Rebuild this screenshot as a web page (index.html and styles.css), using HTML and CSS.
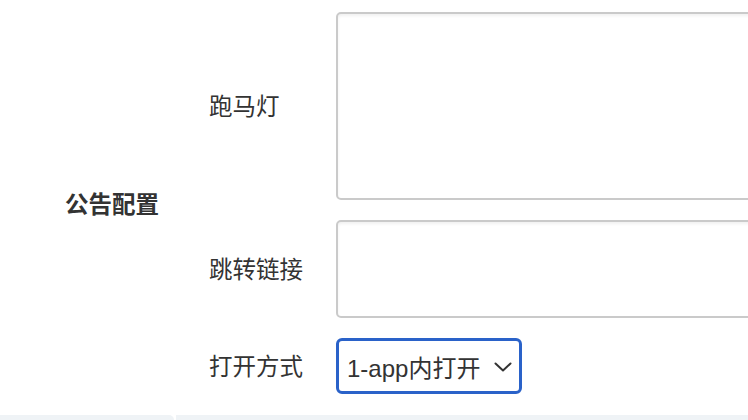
FILE: index.html
```html
<!DOCTYPE html>
<html lang="zh">
<head>
<meta charset="utf-8">
<link rel="stylesheet" href="styles.css">
</head>
<body>
<div class="page">
  <div class="group">
    <div class="group-title">公告配置</div>
    <div class="fields">
      <div class="row">
        <label class="label">跑马灯</label>
        <textarea class="input tall"></textarea>
      </div>
      <div class="row">
        <label class="label">跳转链接</label>
        <textarea class="input short"></textarea>
      </div>
      <div class="row">
        <label class="label">打开方式</label>
        <div class="select">
          <span class="select-text">1-app内打开</span>
          <svg class="chev" width="18" height="10" viewBox="0 0 18 10"><path d="M1.5 1.5 L9 8.5 L16.5 1.5" fill="none" stroke="#333" stroke-width="2" stroke-linecap="round" stroke-linejoin="round"/></svg>
        </div>
      </div>
    </div>
  </div>
  <div class="footer">
    <div class="foot-left"></div>
    <div class="foot-right"></div>
  </div>
</div>
</body>
</html>
```
FILE: styles.css
```css
* { box-sizing: border-box; }
html, body { margin: 0; padding: 0; background: #fff; overflow: hidden; }
body {
  width: 748px; height: 420px;
  font-family: "Liberation Sans", "Noto Sans CJK SC", sans-serif;
  color: #333;
}
.page { width: 748px; height: 420px; display: flex; flex-direction: column; overflow: hidden; }
.group { display: flex; align-items: center; padding-top: 12px; }
.group-title {
  flex: 0 0 209px; padding-left: 65px;
  font-family: "Noto Sans CJK SC", sans-serif;
  font-size: 23.5px; font-weight: 700; color: #333;
}
.fields { flex: 0 0 auto; display: flex; flex-direction: column; gap: 20px; }
.row { display: flex; align-items: center; }
.label {
  flex: 0 0 127px;
  font-family: "Noto Sans CJK SC", sans-serif;
  font-size: 23.5px; color: #333;
  margin-top: -3px;
}
.input {
  display: block; flex: 0 0 440px; width: 440px; margin: 0; resize: none;
  border: 2px solid #cacaca; border-radius: 5px;
  box-shadow: inset 0 2px 3px rgba(0,0,0,0.06);
  background: #fff; outline: none;
}
.tall { height: 188px; }
.short { height: 98px; }
.select {
  flex: 0 0 186px; height: 56px;
  border: 3px solid #2a62c9; border-radius: 6px;
  display: flex; align-items: center; justify-content: space-between;
  padding: 0 7px 0 8px;
  background: #fff;
}
.select-text { font-size: 24px; color: #333; white-space: nowrap; }
.chev { display: block; margin-top: 2px; flex: 0 0 auto; }
.footer { margin-top: 21px; flex: 1; display: flex; gap: 2px; }
.foot-left { width: 174px; background: #eff3f6; border-top-right-radius: 5px; }
.foot-right { flex: 1; background: #eff3f6; }
```
